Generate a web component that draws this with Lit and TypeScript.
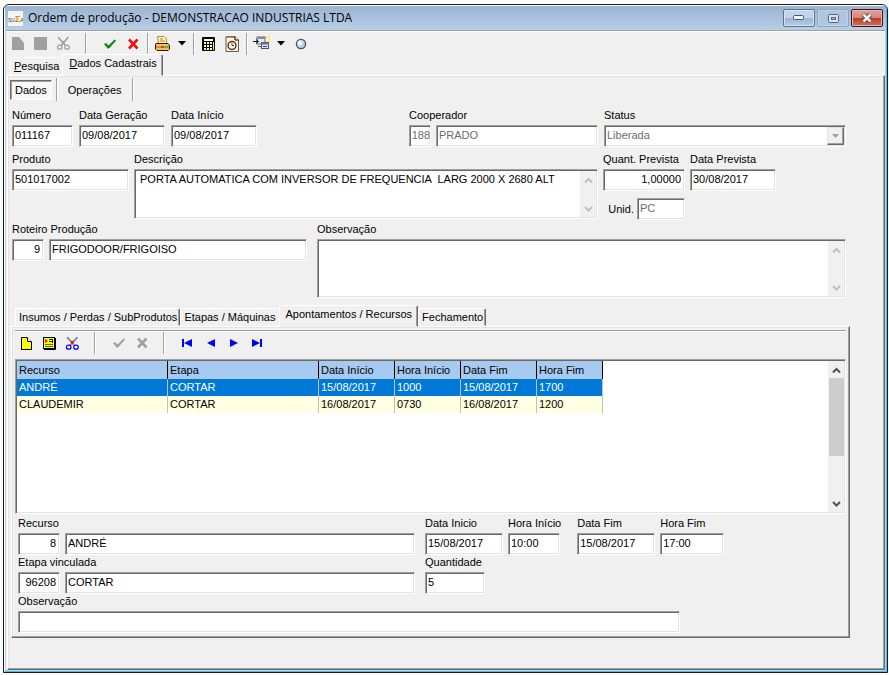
import { LitElement, html, css, svg, nothing } from "lit";
import { customElement, state } from "lit/decorators.js";
import { classMap } from "lit/directives/class-map.js";

const icon = (w: number, h: number, body: unknown) => html`
  <svg width=${w} height=${h} viewBox="0 0 ${w} ${h}" aria-hidden="true">${body}</svg>
`;

const scissors = (blade: string, handle: string, pivot: string) =>
  icon(15, 13, svg`
    <path d="M2 0 L9.5 8.5 M12.5 0 L5 8.5" stroke=${blade} stroke-width="1.7" fill="none"/>
    <ellipse cx="3.7" cy="10.2" rx="2.3" ry="2" stroke=${handle} stroke-width="1.2" fill="none"/>
    <ellipse cx="11" cy="10.2" rx="2.3" ry="2" stroke=${handle} stroke-width="1.2" fill="none"/>
    <rect x="6" y="4" width="2.6" height="2.6" fill=${pivot}/>`);

const check = (color: string) =>
  icon(14, 12, svg`<path d="M1 6 L3 5 L5.5 7.5 L11.5 1.5 L13.2 2.4 L6 10.4 L4.6 10.4 Z" fill=${color}/>`);

const cross = (color: string) =>
  icon(12, 12, svg`<path d="M2 1.500 L10.500 10.500 M10.500 1.500 L2 10.500" stroke=${color} stroke-width="2.600" fill="none"/>`);

const dropArrow = icon(8, 5, svg`<path d="M0 0 H8 L4 4.6 Z" fill="#000"/>`);

const icons = {
  docOff: icon(12, 13, svg`<path d="M0 0 H7 L12 6 V13 H0 Z" fill="#a0a0a0"/>`),
  saveOff: icon(13, 13, svg`<path d="M0 0 H13 V13 H1 L0 12 Z" fill="#a0a0a0"/>`),
  printer: icon(15, 15, svg`
    <path d="M3.5 8 L2.5 .5 H9 L11.5 3 V8 Z" fill="#fff3c4" stroke="#b8862b"/>
    <path d="M5 3 H8 M5 5 H10" stroke="#b8862b"/>
    <path d="M1 7.5 H13 L14.5 9.5 V13 L13 14.5 H2 L.5 13 V9 Z" fill="#f5c15a" stroke="#2b1c00"/>
    <rect x="1" y="10" width="13" height="2" fill="#f0883a"/>
    <rect x="6" y="10" width="3" height="2" fill="#e8342e"/>
    <rect x="10" y="10" width="3" height="2" fill="#2cd02c"/>`),
  calc: icon(13, 14, svg`
    <rect x="0" y="0" width="13" height="14" rx="1" fill="#000"/>
    <rect x="2" y="2" width="9" height="2" fill="#ffffd0"/>
    ${[5, 8, 11].map((y) => [2, 5, 8].map((x) => svg`<rect x=${x} y=${y} width="2" height="2" fill="#ffffa0"/>`))}
    <rect x="11" y="5" width="1" height="8" fill="#ffe94a"/>`),
  clock: icon(14, 16, svg`
    <path d="M1 .5 H10 L13.5 4 V15.5 H1 Z" fill="#fdf6e3" stroke="#6b5a45"/>
    <path d="M1 1.2 H10" stroke="#c08a3c" stroke-width="1.4"/>
    <path d="M10 .5 V4 H13.5" fill="#fff" stroke="#000"/>
    <circle cx="7" cy="9.5" r="4" fill="#fff" stroke="#5b2a12" stroke-width="1.4"/>
    <path d="M7 7 V9.5 H9" stroke="#c00" fill="none"/>`),
  exporter: icon(17, 15, svg`
    <rect x="10" y="0" width="7" height="7" fill="#ffe58a"/>
    <rect x="12" y="2" width="3" height="3" fill="#fff8d8"/>
    <rect x="4" y="1" width="8" height="7" fill="#e6e8f2" stroke="#667"/>
    <path d="M4 2 H12" stroke="#8088b0" stroke-width="2"/>
    <rect x="8.500" y="6.500" width="7" height="6" fill="#dfe3f5" stroke="#556"/>
    <path d="M8 7.500 H16" stroke="#6670a8" stroke-width="2"/>
    <path d="M10 10.500 H14" stroke="#3c4c8c"/>
    <path d="M0 5.500 H5 M3 3.500 L5.500 5.500 L3 7.500" stroke="#111" fill="none"/>
    <path d="M5 10.500 H8" stroke="#556"/>`),
  orb: icon(12, 12, svg`
    <circle cx="6" cy="6" r="4.600" fill="#a9d4f0" stroke="#4a5058" stroke-width="1.300"/>
    <circle cx="5" cy="5" r="2.500" fill="#eef8ff"/>`),
  newRec: icon(11, 13, svg`
    <path d="M.5 .5 H6 L10.500 5 V12.500 H.5 Z" fill="#ffff00" stroke="#000"/>
    <path d="M6.500 .5 V4.500 H10.500" fill="#fff" stroke="#000"/>
    <path d="M0 12.500 H11" stroke="#000"/>`),
  editRec: icon(13, 13, svg`
    <rect x=".5" y=".5" width="11" height="11" fill="#ffff00" stroke="#000"/>
    <path d="M2 2 L5 4 L2 6 Z" fill="#f00"/>
    <path d="M6 2.500 H10 M6 4.500 H10 M9.500 2 V6" stroke="#224"/>
    <path d="M2 7.500 H10 M2 9.500 H10" stroke="#55559c"/>
    <path d="M12.500 1 V12.500 H1" stroke="#000" fill="none"/>`),
  first: icon(11, 8, svg`<rect x="0" y="0" width="2" height="8" fill="#0000ff"/><path d="M10 0 V8 L2 4 Z" fill="#0000ff"/>`),
  prev: icon(8, 8, svg`<path d="M8 0 V8 L0 4 Z" fill="#0000ff"/>`),
  next: icon(8, 8, svg`<path d="M0 0 V8 L8 4 Z" fill="#0000ff"/>`),
  last: icon(11, 8, svg`<path d="M1 0 V8 L9 4 Z" fill="#0000ff"/><rect x="9" y="0" width="2" height="8" fill="#0000ff"/>`),
};

const chevron = (down: boolean, color: string) =>
  icon(9, 7, svg`<path d=${down ? "M1 1 L4.500 4.500 L8 1" : "M1 5.500 L4.500 2 L8 5.500"} stroke=${color} stroke-width="2" fill="none"/>`);

const columns = ["Recurso", "Etapa", "Data Início", "Hora Início", "Data Fim", "Hora Fim"];
const records = [
  ["ANDRÉ", "CORTAR", "15/08/2017", "1000", "15/08/2017", "1700"],
  ["CLAUDEMIR", "CORTAR", "16/08/2017", "0730", "16/08/2017", "1200"],
];
const detailTabs = ["Insumos / Perdas / SubProdutos", "Etapas / Máquinas", "Apontamentos / Recursos", "Fechamento"];

@customElement("app-root")
export class AppRoot extends LitElement {
  @state() private selected = 0;
  @state() private tab = 2;

  static styles = css`
    :host {
      display: flex;
      box-sizing: border-box;
      min-height: 100vh;
      padding: 4px 1px 2px 3px;
      background: #fafafa;
      color: #000;
      font: 11px/14px "Liberation Sans", Arial, sans-serif;
    }
    *, *::before { box-sizing: border-box; }
    button, input, textarea, select { font: inherit; color: inherit; margin: 0; border-radius: 0; outline: none; }
    button { padding: 0; border: 0; background: none; }
    svg { display: block; flex: none; }

    .window {
      flex: 1;
      min-width: 0;
      display: flex;
      flex-direction: column;
      border: 1px solid #1a1a1a;
      border-radius: 6px 6px 0 0;
      background: #b9d1ea;
      overflow: hidden;
    }
    .frame {
      flex: 1;
      display: flex;
      flex-direction: column;
      border: 1px solid;
      border-color: #fff #35c7ee #35c7ee #fff;
      border-radius: 5px 5px 0 0;
    }
    .titlebar {
      display: flex;
      align-items: center;
      height: 24px;
      padding: 0 3px 0 3px;
      background: linear-gradient(#9ab4d0, #b7cfe8);
    }
    .title {
      flex: 1;
      margin: 0 0 0 5px;
      font: 12px/20px "Open Sans", "Noto Sans", sans-serif;
      white-space: nowrap;
      overflow: hidden;
    }
    .winbtns { display: flex; gap: 2px; }
    .winbtn {
      display: grid;
      place-items: center;
      width: 32px;
      height: 18px;
      border: 1px solid #5d7391;
      border-radius: 2px;
      background: linear-gradient(#c0d4ea 48%, #9bb6d3 50%, #b4cce6);
      box-shadow: inset 0 0 0 1px #d6e4f3;
    }
    .winbtn.dim { border-color: #8ea7c4; background: #aec7e1; box-shadow: inset 0 0 0 1px #bdd2e8; }
    .winbtn.close {
      border-color: #43131c;
      background: linear-gradient(#e0a199, #d5877b 48%, #b83a22 50%, #cf7460);
      box-shadow: inset 0 0 0 1px #e8b5ac;
    }

    .client {
      flex: 1;
      display: flex;
      flex-direction: column;
      margin: 0 1px 1px 1px;
      border-top: 1px solid #a0a0a0;
      background: #f0f0f0;
      box-shadow: inset 0 1px 0 #fff;
      padding-top: 1px;
    }
    .toolbar { display: flex; align-items: center; height: 23px; }
    .tool { display: grid; place-items: center; width: 23px; height: 22px; }
    .tool.narrow { width: 16px; }
    .sep { width: 2px; height: 22px; margin: 0 2px 0 3px; border-left: 1px solid #a0a0a0; border-right: 1px solid #fff; }
    .sep.wide { margin: 0 11px 0 10px; }

    .tabs { display: flex; align-items: flex-end; position: relative; z-index: 1; }
    .tab {
      height: 18px;
      padding: 0 2px 0 3px;
      border: 1px solid;
      border-color: #fff #696969 transparent #fff;
      border-radius: 2px 2px 0 0;
      box-shadow: inset -1px 0 0 #a0a0a0;
      background: #f0f0f0;
      white-space: nowrap;
      text-align: center;
    }
    .tab.flat { border-right-color: transparent; box-shadow: none; }
    .tab.on { height: 22px; margin-bottom: -1px; padding: 0 5px 4px 6px; }
    .tabs.main { padding-left: 4px; height: 20px; }
    .tabs.detail { padding-left: 5px; height: 21px; margin-top: 7px; }

    .page, .panel {
      border: 1px solid;
      border-color: #fff #696969 #696969 #fff;
      box-shadow: inset -1px -1px 0 #a0a0a0, inset 1px 1px 0 #e3e3e3;
    }
    .page { flex: 1; margin-left: 1px; padding: 2px 38px 0 2px; }
    .subtabs { display: flex; align-items: center; height: 23px; }
    .subtab { height: 20px; padding: 0 10px; }
    .subtab.on {
      padding: 0 4px;
      border: 1px solid;
      border-color: #696969 #fff #fff #696969;
      box-shadow: inset 1px 1px 0 #a0a0a0;
      background: #f8f8f8;
    }
    .subtabs .sep { margin: 0 0 0 4px; height: 23px; }
    .subtabs .sep.end { margin: 0; }

    .row { display: flex; margin-left: 2px; }
    .row.r1 { margin-top: 7px; }
    .row.r2 { margin-top: 5px; }
    .row.r3 { margin-top: 2px; }
    .field { display: flex; flex-direction: column; gap: 3px; white-space: nowrap; min-width: 0; }
    .pair { display: flex; gap: 5px; }
    .push { margin-left: auto; }
    .grow { flex: 1; min-width: 0; }
    .gap5 { gap: 5px; }
    .gap6 { gap: 6px; }
    .gap10 { gap: 10px; }
    .right { width: 243px; }
    .below { display: flex; gap: 3px; align-items: center; width: 82px; justify-content: flex-end; margin-top: 7px; }

    .box, .memo, .combo, .grid {
      border: 1px solid;
      border-color: #a0a0a0 #fff #fff #a0a0a0;
      box-shadow: inset 1px 1px 0 #696969, inset -1px -1px 0 #e3e3e3;
      background: #fff;
    }
    .box { height: 22px; padding: 1px 3px 3px 2px; min-width: 0; }
    .box.num { text-align: right; }
    .box:disabled, .combo select:disabled { color: #6d6d6d; opacity: 1; background: transparent; }
    .box:disabled { background: #fff; }
    .box.w22 { width: 22px; padding-left: 1px; padding-right: 0; }
    .w32 { width: 32px; }
    .w42 { width: 42px; }
    .w48 { width: 48px; }
    .w52 { width: 52px; }
    .w60 { width: 60px; }
    .w61 { width: 61px; }
    .w64 { width: 64px; }
    .w78 { width: 78px; }
    .w82 { width: 82px; }
    .w86 { width: 86px; }
    .w117 { width: 117px; }
    .w162 { width: 162px; }
    .w242 { width: 242px; }
    .w258 { width: 258px; }
    .w80p { width: 80%; }

    .memo { display: flex; padding: 1px; height: 50px; }
    .memo.tall { height: 59px; }
    .memo textarea {
      flex: 1;
      min-width: 0;
      border: 0;
      padding: 1px 4px;
      background: transparent;
      resize: none;
      overflow: hidden;
    }
    .scroll {
      display: flex;
      flex-direction: column;
      align-items: center;
      justify-content: space-between;
      width: 16px;
      padding: 6px 0 4px;
      background: #f0f0f0;
    }
    .combo { display: flex; height: 22px; padding: 1px; }
    .combo select { flex: 1; min-width: 0; appearance: none; border: 0; padding: 0 1px 2px; }
    .combo .drop {
      display: grid;
      place-items: center;
      width: 17px;
      border: 1px solid;
      border-color: #e3e3e3 #696969 #696969 #e3e3e3;
      box-shadow: inset -1px -1px 0 #a0a0a0;
      background: #f0f0f0;
    }

    .panel { margin: 0 -4px 0 1px; padding: 3px 3px 4px; }
    .tools2 {
      display: flex;
      align-items: flex-start;
      height: 29px;
      border-top: 1px solid #a0a0a0;
      box-shadow: inset 0 1px 0 #fff;
      padding-top: 1px;
    }
    .grid { display: flex; height: 155px; padding: 1px; }
    .gridbody { flex: 1; min-width: 0; overflow: hidden; }
    table { border-collapse: separate; border-spacing: 0; table-layout: fixed; width: 586px; }
    th, td { height: 17px; padding: 0 0 0 2px; text-align: left; font-weight: normal; white-space: nowrap; line-height: 15px; border-right: 1px solid #c0c0c0; }
    th { height: 18px; width: 76px; background: #a6caf0; border-right-color: #000; }
    th.name { width: 151px; }
    th.hour { width: 66px; }
    td { background: #ffffe1; }
    tr.sel td { background: #0078d7; color: #fff; }
    .scroll.live { justify-content: flex-start; gap: 4px; }
    .thumb { width: 15px; height: 78px; background: #cdcdcd; }
    .scroll.live svg:last-child { margin-top: auto; }

    .detailrow { display: flex; gap: 10px; margin-left: 3px; }
    .detailrow.first { margin-top: 2px; }
    .times { display: flex; width: 421px; gap: 5px; }
    .times .later { margin-left: 11px; }
  `;

  private input(id: string, label: string, value: string, cls: string, off = false) {
    return html`<div class="field">
      <label for=${id}>${label}</label>
      <input id=${id} class="box ${cls}" .value=${value} ?disabled=${off} />
    </div>`;
  }

  private pair(id: string, label: string, code: string, codeCls: string, name: string, nameCls: string, off = false) {
    return html`<div class="field ${nameCls === "grow" ? "grow" : ""}">
      <label for=${id}>${label}</label>
      <div class="pair">
        <input id=${id} class="box num ${codeCls}" .value=${code} ?disabled=${off} />
        <input class="box ${nameCls}" aria-label=${label} .value=${name} ?disabled=${off} />
      </div>
    </div>`;
  }

  private memo(id: string, label: string, value: string, tall = false) {
    return html`<div class="field grow">
      <label for=${id}>${label}</label>
      <div class=${classMap({ memo: true, tall })}>
        <textarea id=${id} .value=${value}></textarea>
        <div class="scroll">${chevron(false, "#bfbfbf")}${chevron(true, "#bfbfbf")}</div>
      </div>
    </div>`;
  }

  private tool(label: string, glyph: unknown, narrow = false) {
    return html`<button class=${classMap({ tool: true, narrow })} aria-label=${label}>${glyph}</button>`;
  }

  render() {
    return html`
      <div class="window"><div class="frame">
        <header class="titlebar">
          <svg width="15" height="15" viewBox="0 0 15 15" aria-hidden="true">
            <rect width="15" height="15" fill="#f4f4f2"/>
            <text x="0" y="11" font-family="Liberation Sans" font-size="5" fill="#333">SU<tspan font-weight="bold" font-size="9" fill="#e8851c">Σ</tspan>A</text>
          </svg>
          <h1 class="title">Ordem de produção - DEMONSTRACAO INDUSTRIAS LTDA</h1>
          <div class="winbtns">
            <button class="winbtn" aria-label="Minimizar">
              ${icon(12, 6, svg`<rect x=".5" y=".5" width="10" height="4" rx="1" fill="#f4f4f4" stroke="#4b5566"/>`)}
            </button>
            <button class="winbtn dim" aria-label="Restaurar">
              ${icon(11, 9, svg`<rect x=".5" y=".5" width="10" height="8" rx="1" fill="#dde3ea" stroke="#56637a"/><rect x="3.500" y="3.500" width="4" height="2" fill="#a9bfd8" stroke="#56637a"/>`)}
            </button>
            <button class="winbtn close" aria-label="Fechar">
              ${icon(12, 10, svg`<path d="M2.500 1.500 L9.500 8.500 M9.500 1.500 L2.500 8.500" stroke="#5a3a44" stroke-width="4.500"/><path d="M2.500 1.500 L9.500 8.500 M9.500 1.500 L2.500 8.500" stroke="#f6f6f6" stroke-width="2.600"/>`)}
            </button>
          </div>
        </header>

        <div class="client">
          <div class="toolbar">
            ${this.tool("Novo", icons.docOff)}${this.tool("Salvar", icons.saveOff)}
            ${this.tool("Excluir", scissors("#a0a0a0", "#a0a0a0", "#a0a0a0"))}
            <span class="sep wide"></span>
            ${this.tool("Confirmar", check("#0a8a0a"))}${this.tool("Cancelar", cross("#f01010"))}
            <span class="sep"></span>
            ${this.tool("Imprimir", icons.printer)}${this.tool("Opções de impressão", dropArrow, true)}
            <span class="sep"></span>
            ${this.tool("Calculadora", icons.calc)}${this.tool("Histórico", icons.clock)}
            <span class="sep"></span>
            ${this.tool("Exportar", icons.exporter)}${this.tool("Opções de exportação", dropArrow, true)}
            ${this.tool("Ajuda", icons.orb)}
          </div>

          <div class="tabs main" role="tablist">
            <button class="tab flat" role="tab"><u>P</u>esquisa</button>
            <button class="tab on" role="tab" aria-selected="true"><u>D</u>ados Cadastrais</button>
          </div>

          <main class="page">
            <div class="subtabs">
              <button class="subtab on">Dados</button><span class="sep"></span>
              <button class="subtab">Operações</button><span class="sep end"></span>
            </div>

            <div class="row r1 gap6">
              ${this.input("numero", "Número", "011167", "w61")}
              ${this.input("geracao", "Data Geração", "09/08/2017", "w86")}
              ${this.input("inicio", "Data Início", "09/08/2017", "w86")}
              <div class="push">${this.pair("coop", "Cooperador", "188", "w22", "PRADO", "w162", true)}</div>
              <div class="field w242">
                <label for="status">Status</label>
                <div class="combo">
                  <select id="status" disabled><option>Liberada</option></select>
                  <span class="drop">${icon(7, 4, svg`<path d="M0 0 H7 L3.500 4 Z" fill="#a0a0a0"/>`)}</span>
                </div>
              </div>
            </div>

            <div class="row r2 gap5">
              ${this.input("produto", "Produto", "501017002", "w117")}
              ${this.memo("descricao", "Descrição", "PORTA AUTOMATICA COM INVERSOR DE FREQUENCIA  LARG 2000 X 2680 ALT")}
              <div class="right">
                <div class="pair">
                  ${this.input("quant", "Quant. Prevista", "1,00000", "num w82")}
                  ${this.input("prevista", "Data Prevista", "30/08/2017", "w86")}
                </div>
                <div class="below">
                  <label for="unid">Unid.</label>
                  <input id="unid" class="box w48" .value=${"PC"} disabled />
                </div>
              </div>
            </div>

            <div class="row r3 gap10">
              ${this.pair("roteiro", "Roteiro Produção", "9", "w32", "FRIGODOOR/FRIGOISO", "w258")}
              ${this.memo("obs", "Observação", "", true)}
            </div>

            <div class="tabs detail" role="tablist">
              ${detailTabs.map((t, i) => html`<button
                role="tab"
                aria-selected=${i === this.tab}
                class=${classMap({ tab: true, on: i === this.tab, flat: i === this.tab - 1 })}
                @click=${() => (this.tab = i)}>${t}</button>`)}
            </div>

            <section class="panel">
              <div class="tools2">
                ${this.tool("Incluir", icons.newRec)}${this.tool("Alterar", icons.editRec)}
                ${this.tool("Excluir", scissors("#808080", "#0000ff", "#ff0000"))}
                <span class="sep wide"></span>
                ${this.tool("Confirmar", check("#a0a0a0"))}${this.tool("Cancelar", cross("#a0a0a0"))}
                <span class="sep wide"></span>
                ${this.tool("Primeiro", icons.first)}${this.tool("Anterior", icons.prev)}
                ${this.tool("Próximo", icons.next)}${this.tool("Último", icons.last)}
              </div>

              <div class="grid">
                <div class="gridbody">
                  <table>
                    <thead><tr>${columns.map((c, i) => html`<th scope="col" class=${i < 2 ? "name" : c.startsWith("Hora") ? "hour" : nothing}>${c}</th>`)}</tr></thead>
                    <tbody>
                      ${records.map((r, i) => html`<tr class=${classMap({ sel: i === this.selected })} @click=${() => (this.selected = i)}>
                        ${r.map((v) => html`<td>${v}</td>`)}
                      </tr>`)}
                    </tbody>
                  </table>
                </div>
                <div class="scroll live">
                  ${chevron(false, "#505050")}<span class="thumb"></span>${chevron(true, "#505050")}
                </div>
              </div>

              <div class="detailrow first">
                ${this.pair("recurso", "Recurso", "8", "w42", "ANDRÉ", "grow")}
                <div class="times">
                  ${this.input("dini", "Data Inicio", "15/08/2017", "w78")}
                  ${this.input("hini", "Hora Início", "10:00", "w52")}
                  <div class="later">${this.input("dfim", "Data Fim", "15/08/2017", "w78")}</div>
                  ${this.input("hfim", "Hora Fim", "17:00", "w64")}
                </div>
              </div>
              <div class="detailrow">
                ${this.pair("etapa", "Etapa vinculada", "96208", "w42", "CORTAR", "grow")}
                <div class="times">${this.input("qtd", "Quantidade", "5", "w60")}</div>
              </div>
              <div class="detailrow">
                <div class="field w80p">
                  <label for="obs2">Observação</label>
                  <input id="obs2" class="box" />
                </div>
              </div>
            </section>
          </main>
        </div>
      </div></div>
    `;
  }
}
